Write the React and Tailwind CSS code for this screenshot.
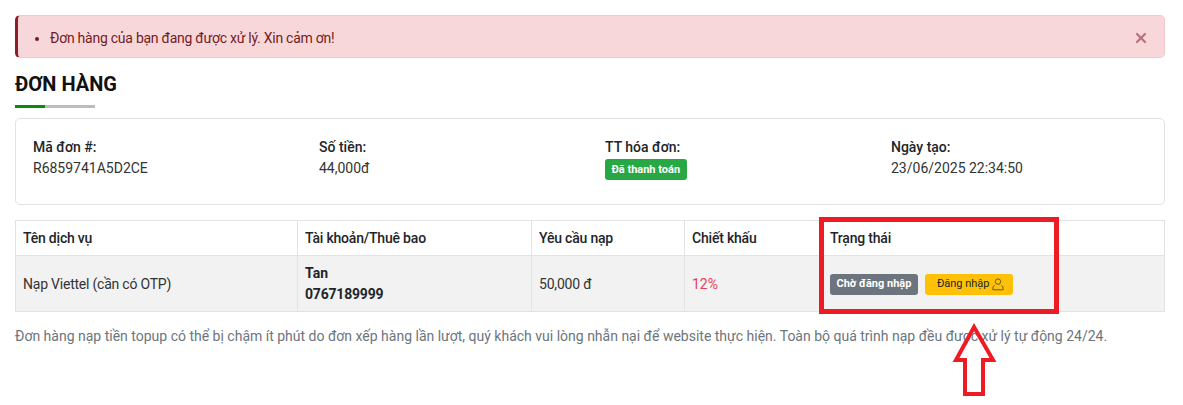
import { X } from "lucide-react"

const INFO = [
  { label: "Mã đơn #:", value: "R6859741A5D2CE" },
  { label: "Số tiền:", value: "44,000đ" },
  { label: "TT hóa đơn:", badge: "Đã thanh toán" },
  { label: "Ngày tạo:", value: "23/06/2025 22:34:50" },
]

const HEADERS = ["Tên dịch vụ", "Tài khoản/Thuê bao", "Yêu cầu nạp", "Chiết khấu", "Trạng thái"]

export default function App() {
  return (
    <div className="relative h-[405px] w-[1183px] overflow-hidden bg-white pl-[15px] pr-[18px] pt-[15px] font-['Roboto',sans-serif] text-[14px] text-[#212529]">
      {/* Alert */}
      <div className="flex h-[43px] items-center justify-between rounded-[5px] border border-[#f5c6cb] border-l-[3px] border-l-[#8f1d27] bg-[#f8d7da] pl-[32px] pr-[15px] text-[#721c24]">
        <ul className="list-disc pt-[3px] tracking-[-0.25px]">
          <li>Đơn hàng của bạn đang được xử lý. Xin cảm ơn!</li>
        </ul>
        <X size={16} strokeWidth={3.5} className="mt-[3px] text-[#b8747c]" />
      </div>

      {/* Heading */}
      <h1 className="mt-[13px] text-[20px] font-bold leading-[26px] text-[#111]">ĐƠN HÀNG</h1>
      <div className="mt-[8px] h-[3px] w-[80px] bg-[#bdbdbd]">
        <div className="h-full w-[30px] bg-[#0a8a0a]" />
      </div>

      {/* Order info */}
      <div className="mt-[10px] grid h-[87px] grid-cols-[286px_286px_286px_1fr] rounded-[5px] border border-[#e3e3e3] pl-[17px] pt-[18px]">
        {INFO.map((item) => (
          <div key={item.label} className="leading-[21px]">
            <div className="font-medium">{item.label}</div>
            {item.value && <div className="text-[#333]">{item.value}</div>}
            {item.badge && (
              <span className="mt-[1px] flex h-[21px] w-fit items-center rounded-[3px] bg-[#28a745] px-[6.5px] text-[11px] font-bold text-white">
                {item.badge}
              </span>
            )}
          </div>
        ))}
      </div>

      {/* Order table */}
      <table className="mt-[15px] w-full table-fixed border-collapse border border-[#e1e3e6]">
        <colgroup>
          <col className="w-[282px]" />
          <col className="w-[234px]" />
          <col className="w-[153px]" />
          <col className="w-[138px]" />
          <col />
        </colgroup>
        <thead>
          <tr className="h-[35px]">
            {HEADERS.map((h) => (
              <th key={h} className="border border-[#e1e3e6] px-[7px] text-left font-medium tracking-[-0.2px]">
                {h}
              </th>
            ))}
          </tr>
        </thead>
        <tbody>
          <tr className="h-[56px] bg-[#f2f2f2]">
            <td className="border border-[#e1e3e6] px-[7px] pt-[1px] tracking-[-0.22px] text-[#333]">Nạp Viettel (cần có OTP)</td>
            <td className="border border-[#e1e3e6] px-[7px] font-bold leading-[21px]">
              Tan
              <br />
              <span className="tracking-[-0.2px]">0767189999</span>
            </td>
            <td className="border border-[#e1e3e6] px-[7px] pt-[1px] tracking-[-0.2px] text-[#333]">50,000 đ</td>
            <td className="border border-[#e1e3e6] px-[7px] pt-[1px] text-[#e83e5c]">12%</td>
            <td className="border border-[#e1e3e6] px-[7px] pt-[1px]">
              <div className="flex items-center gap-[7px]">
                <span className="flex h-[21px] items-center rounded-[3px] bg-[#6c757d] px-[6.5px] text-[11px] font-bold text-white">
                  Chờ đăng nhập
                </span>
                <button className="flex h-[21px] w-[88px] items-center gap-[2px] rounded-[3px] bg-[#ffc107] pl-[12px] text-[11px] text-[#212529]">
                  Đăng nhập
                  <svg width="12" height="13" viewBox="0 0 12 13" fill="none" stroke="currentColor" strokeWidth="1" className="text-[#6b5a14]">
                    <circle cx="6" cy="3.6" r="2.7" />
                    <path d="M2.6 7.4 C1.2 8 0.8 9.3 0.8 11.8 H11.2 C11.2 9.3 10.8 8 9.4 7.4" />
                  </svg>
                </button>
              </div>
            </td>
          </tr>
        </tbody>
      </table>

      <p className="mt-[14px] whitespace-nowrap leading-[21px] text-[#6c757d]">
        Đơn hàng nạp tiền topup có thể bị chậm ít phút do đơn xếp hàng lần lượt, quý khách vui lòng nhẫn nại để website thực hiện. Toàn bộ quá trình nạp đều được xử lý tự động 24/24.
      </p>

      {/* Red annotation drawn over the screenshot */}
      <div className="absolute left-[819px] top-[217px] h-[97px] w-[240px] border-[5px] border-[#ed1c24]" />
      <svg className="absolute left-[952px] top-[322px]" width="46" height="78" viewBox="0 0 46 78" fill="none">
        <path d="M22 5 L41 38 H31 V72 H13 V38 H4 Z" stroke="#ed1c24" strokeWidth="4" />
      </svg>
    </div>
  )
}
